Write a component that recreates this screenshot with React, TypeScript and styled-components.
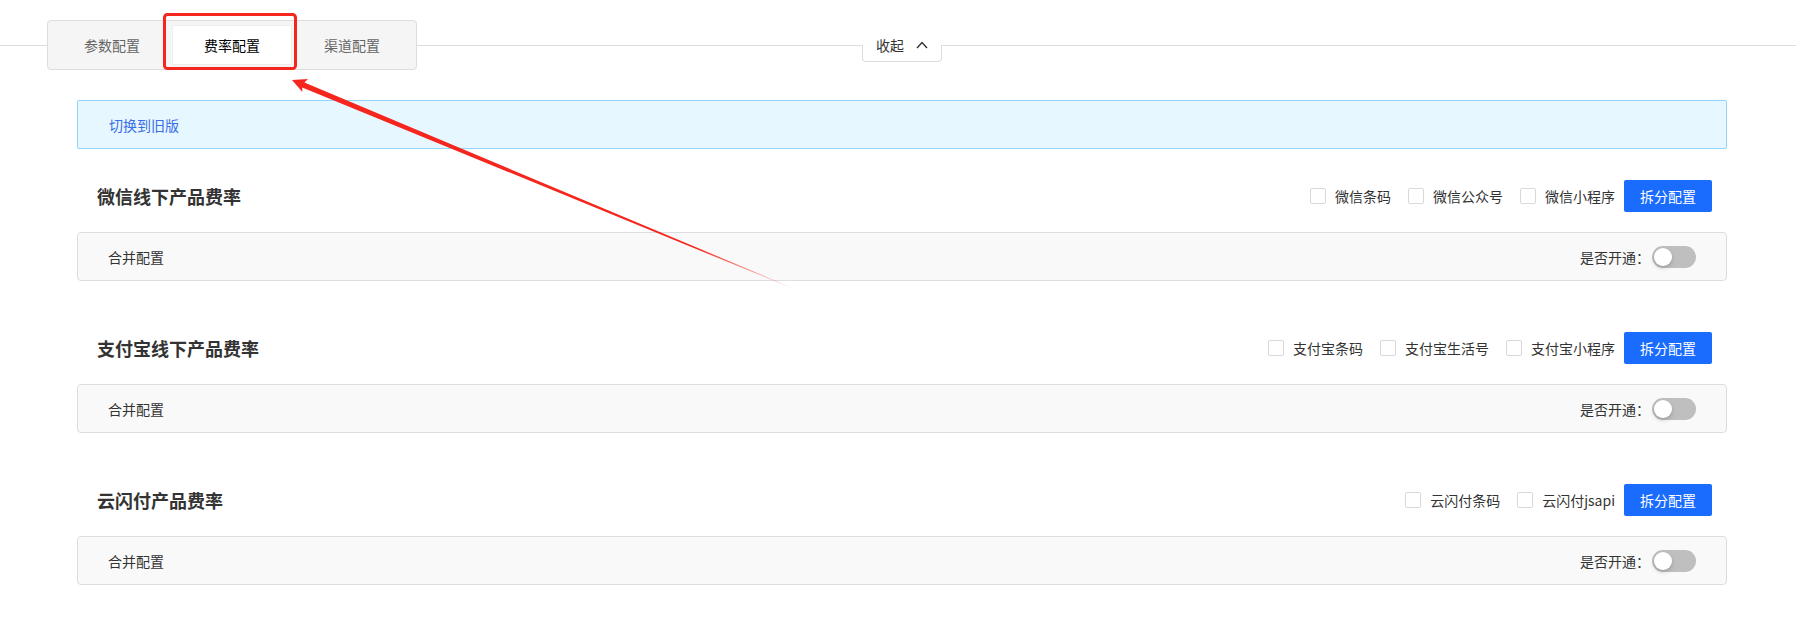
import React, { useState } from "react";
import styled, { createGlobalStyle } from "styled-components";

const GlobalStyle = createGlobalStyle`
  html, body {
    margin: 0;
    padding: 0;
    background: #fff;
  }
  body {
    font-family: "Noto Sans CJK SC", "Liberation Sans", sans-serif;
    color: #333;
  }
`;

const Page = styled.div`
  position: relative;
  width: 1796px;
  min-height: 619px;
`;

const TopBar = styled.div`
  display: grid;
  grid-template-columns: 1fr auto 1fr;
  align-items: start;
  height: 70px;
  background: linear-gradient(#ddd, #ddd) no-repeat 0 45px / 100% 1px;
`;

const TabGroup = styled.div`
  justify-self: start;
  display: flex;
  margin: 20px 0 0 47px;
  padding: 4px;
  background: #f5f5f5;
  border: 1px solid #ddd;
  border-radius: 4px;
`;

const Tab = styled.div<{ $active?: boolean }>`
  width: 120px;
  height: 40px;
  display: flex;
  align-items: center;
  justify-content: center;
  font-size: 14px;
  color: ${({ $active }) => ($active ? "#000" : "#666")};
  background: ${({ $active }) => ($active ? "#fff" : "transparent")};
  box-shadow: ${({ $active }) => ($active ? "0 0 0 1px #eee inset" : "none")};
  cursor: pointer;
`;

const CollapseTab = styled.div`
  position: relative;
  margin: 28px 0 0 8px;
  width: 80px;
  height: 34px;
  box-sizing: border-box;
  display: flex;
  align-items: center;
  justify-content: center;
  gap: 12px;
  background: #fff;
  font-size: 14px;
  color: #333;
  cursor: pointer;

  &::after {
    content: "";
    position: absolute;
    left: 0;
    right: 0;
    top: 17px;
    bottom: 0;
    border: 1px solid #ddd;
    border-top: none;
    border-radius: 0 0 4px 4px;
    pointer-events: none;
  }
`;

const Content = styled.div`
  padding: 30px 69px 40px 77px;
`;

const Alert = styled.div`
  height: 49px;
  box-sizing: border-box;
  display: flex;
  align-items: center;
  padding-left: 31px;
  background: #e6f7ff;
  border: 1px solid #91d5ff;
  border-radius: 2px;
  font-size: 14px;
  color: #3a6ee6;
  cursor: pointer;
`;

const Sections = styled.div`
  display: flex;
  flex-direction: column;
  gap: 51px;
  margin-top: 31px;
`;

const Section = styled.section``;

const SectionHeader = styled.div`
  display: flex;
  align-items: center;
  height: 32px;
  padding: 0 15px 0 20px;
`;

const SectionTitle = styled.h3`
  flex: 1;
  margin: 0;
  font-size: 18px;
  font-weight: bold;
  color: #333;
  line-height: 32px;
`;

const Options = styled.div`
  display: flex;
  align-items: center;
`;

const CheckItem = styled.label`
  display: flex;
  align-items: center;
  margin-right: 8px;
  font-size: 14px;
  color: #333;
  cursor: pointer;

  &:last-of-type {
    margin-right: 0;
  }
`;

const CheckBox = styled.span`
  width: 16px;
  height: 16px;
  box-sizing: border-box;
  border: 1px solid #d9d9d9;
  border-radius: 2px;
  background: #fff;
`;

const CheckText = styled.span`
  padding: 0 9px;
  line-height: 20px;
`;

const PrimaryButton = styled.button`
  width: 88px;
  height: 32px;
  border: none;
  border-radius: 2px;
  background: #1a6cff;
  color: #fff;
  font-family: inherit;
  font-size: 14px;
  cursor: pointer;
`;

const ConfigRow = styled.div`
  margin-top: 20px;
  height: 49px;
  box-sizing: border-box;
  display: flex;
  align-items: center;
  justify-content: space-between;
  padding: 0 30px;
  background: #f9f9f9;
  border: 1px solid #ddd;
  border-radius: 4px;
  font-size: 14px;
  color: #333;
`;

const SwitchField = styled.div`
  display: flex;
  align-items: center;
  gap: 2px;
`;

const SwitchTrack = styled.button<{ $on: boolean }>`
  position: relative;
  width: 44px;
  height: 22px;
  padding: 0;
  border: none;
  border-radius: 11px;
  background: ${({ $on }) => ($on ? "#1a6cff" : "#bfbfbf")};
  cursor: pointer;
`;

const SwitchKnob = styled.span<{ $on: boolean }>`
  position: absolute;
  top: 2px;
  left: ${({ $on }) => ($on ? "24px" : "2px")};
  width: 18px;
  height: 18px;
  border-radius: 50%;
  background: #fff;
  box-shadow: 0 2px 4px rgba(0, 35, 11, 0.2);
`;

const Annotation = styled.svg`
  position: absolute;
  left: 0;
  top: 0;
  pointer-events: none;
`;

const sections = [
  {
    title: "微信线下产品费率",
    options: ["微信条码", "微信公众号", "微信小程序"],
  },
  {
    title: "支付宝线下产品费率",
    options: ["支付宝条码", "支付宝生活号", "支付宝小程序"],
  },
  {
    title: "云闪付产品费率",
    options: ["云闪付条码", "云闪付jsapi"],
  },
];

const Switch = () => {
  const [on, setOn] = useState(false);
  return (
    <SwitchTrack $on={on} onClick={() => setOn(!on)}>
      <SwitchKnob $on={on} />
    </SwitchTrack>
  );
};

const ChevronUp = () => (
  <svg width="12" height="8" viewBox="0 0 12 8">
    <path d="M1 7 L6 1.5 L11 7" fill="none" stroke="#333" strokeWidth="1.4" />
  </svg>
);

const App: React.FC = () => {
  return (
    <Page>
      <GlobalStyle />
      <TopBar>
        <TabGroup>
          <Tab>参数配置</Tab>
          <Tab $active>费率配置</Tab>
          <Tab>渠道配置</Tab>
        </TabGroup>
        <CollapseTab>
          <span>收起</span>
          <ChevronUp />
        </CollapseTab>
        <div />
      </TopBar>

      <Content>
        <Alert>切换到旧版</Alert>
        <Sections>
          {sections.map((s) => (
            <Section key={s.title}>
              <SectionHeader>
                <SectionTitle>{s.title}</SectionTitle>
                <Options>
                  {s.options.map((o) => (
                    <CheckItem key={o}>
                      <CheckBox />
                      <CheckText>{o}</CheckText>
                    </CheckItem>
                  ))}
                  <PrimaryButton>拆分配置</PrimaryButton>
                </Options>
              </SectionHeader>
              <ConfigRow>
                <span>合并配置</span>
                <SwitchField>
                  <span>是否开通：</span>
                  <Switch />
                </SwitchField>
              </ConfigRow>
            </Section>
          ))}
        </Sections>
      </Content>

      {/* red highlight + arrow drawn over the page */}
      <Annotation width="1796" height="619" viewBox="0 0 1796 619">
        <defs>
          <linearGradient
            id="arrowFade"
            gradientUnits="userSpaceOnUse"
            x1="292"
            y1="80"
            x2="797"
            y2="290"
          >
            <stop offset="0" stopColor="#f5261d" stopOpacity="1" />
            <stop offset="0.8" stopColor="#f5261d" stopOpacity="1" />
            <stop offset="1" stopColor="#f5261d" stopOpacity="0" />
          </linearGradient>
        </defs>
        <rect
          x="164.5"
          y="14.5"
          width="131"
          height="54"
          rx="3"
          fill="none"
          stroke="#f5261d"
          strokeWidth="3"
        />
        <polygon
          points="292,80 308,79 304.4,82.6 797.1,289.7 796.9,290.3 302.2,87.4 302.4,92"
          fill="url(#arrowFade)"
        />
      </Annotation>
    </Page>
  );
};

export default App;
